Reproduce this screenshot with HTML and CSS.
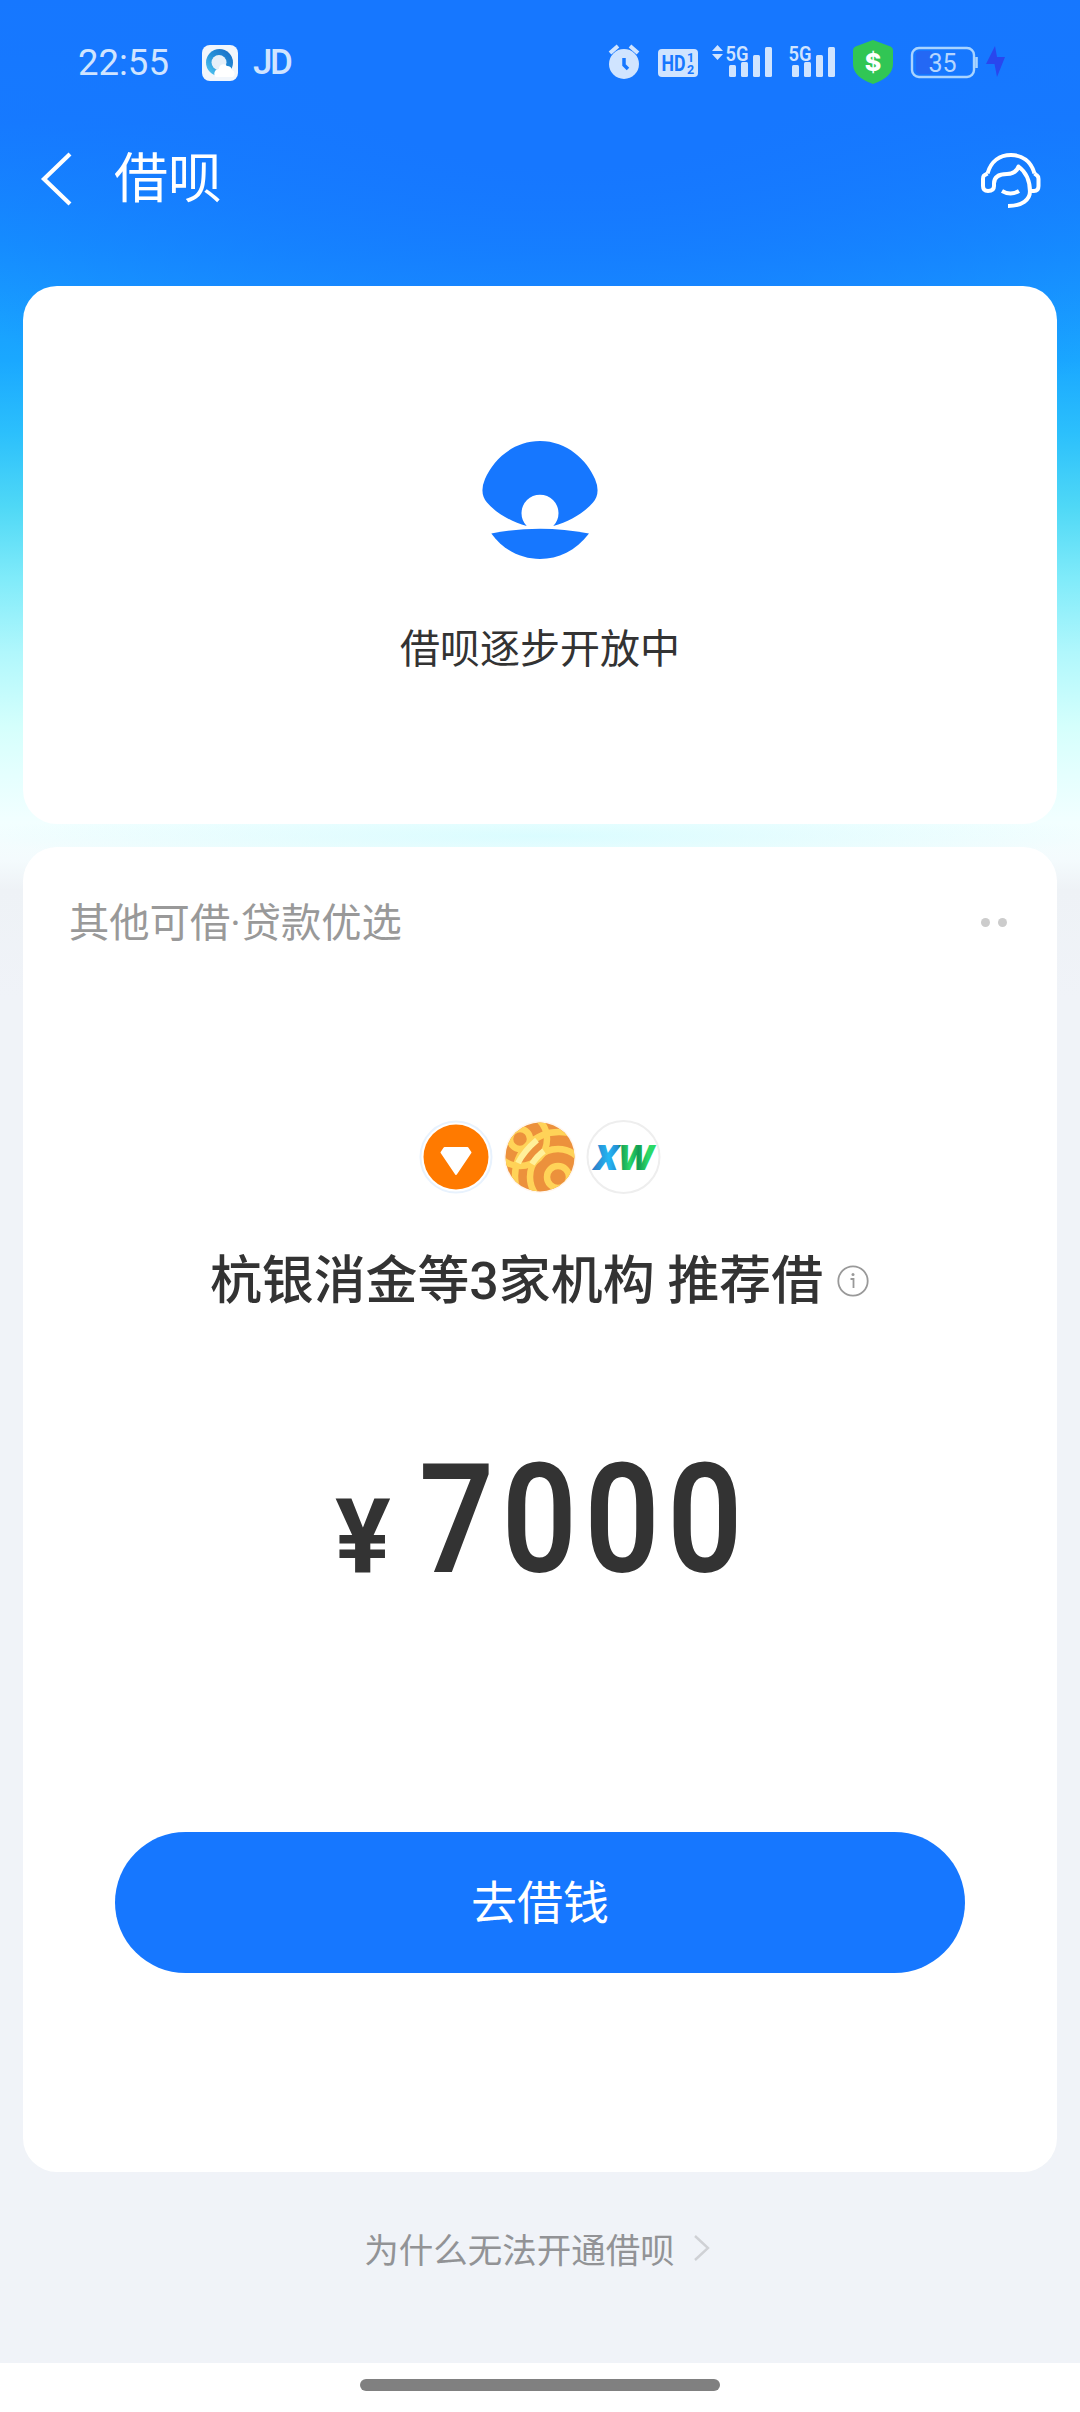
FILE: index.html
```html
<!DOCTYPE html>
<html lang="zh-CN">
<head>
<meta charset="utf-8">
<title>借呗</title>
<link rel="stylesheet" href="styles.css">
</head>
<body>
<div class="page">
  <header class="status">
    <span class="clock">22:55</span>
    <svg class="app" width="36" height="36" viewBox="0 0 36 36">
      <defs><linearGradient id="ring" x1="0" y1="1" x2="1" y2="0"><stop offset="0" stop-color="#58cff5"/><stop offset=".5" stop-color="#2590d8"/><stop offset="1" stop-color="#1769c4"/></linearGradient></defs>
      <rect width="36" height="36" rx="8" fill="#f1f6fc"/>
      <circle cx="17.500" cy="17.500" r="13.500" fill="url(#ring)"/>
      <circle cx="17" cy="17.500" r="7.500" fill="#e6f0f9"/>
      <path d="M14 32a4.500 4.500 0 0 1 3-8a4.500 4.500 0 0 1 8-3a5 5 0 0 1 5 4a4 4 0 0 1 1 7z" fill="#fff"/>
    </svg>
    <span class="jd">JD</span>
    <svg class="tray" width="400" height="50" viewBox="608 38 400 50">
      <g fill="#d0e4ff">
        <circle cx="624" cy="64" r="15"/>
        <path d="M610 53l8-7M638 53l-8-7" stroke="#d0e4ff" stroke-width="4"/>
        <path d="M624 58v7l4 4" fill="none" stroke="#1677ff" stroke-width="3.500"/>
        <rect x="658" y="49" width="40" height="28" rx="4"/>
        <path d="M717.500 45l5.500 6h-11zM717.500 60l5.500-6h-11z"/>
        <rect x="729" y="65" width="7" height="12" rx="1.500"/><rect x="741" y="62" width="7" height="15" rx="1.500"/><rect x="753" y="55" width="7" height="22" rx="1.500"/><rect x="765" y="47" width="7" height="30" rx="1.500"/>
        <rect x="792" y="65" width="7" height="12" rx="1.500"/><rect x="804" y="62" width="7" height="15" rx="1.500"/><rect x="816" y="55" width="7" height="22" rx="1.500"/><rect x="828" y="47" width="7" height="30" rx="1.500"/>
        <text class="net" x="725.500" y="60.500" textLength="23" lengthAdjust="spacingAndGlyphs">5G</text>
        <text class="net" x="788.500" y="60.500" textLength="23" lengthAdjust="spacingAndGlyphs">5G</text>
      </g>
      <g fill="#1677ff">
        <text class="hd" x="661.500" y="71" textLength="24" lengthAdjust="spacingAndGlyphs">HD</text>
        <text class="sub" x="687" y="62">1</text><text class="sub" x="687" y="74">2</text>
      </g>
      <path d="M873 40l17.500 6.500q2.500 1 2.500 3.500v14q0 13-20 20q-20-7-20-20v-14q0-2.500 2.500-3.500z" fill="#31c654"/>
      <text class="dollar" x="873" y="71" text-anchor="middle">$</text>
      <rect x="916" y="51" width="17" height="23" rx="4" fill="#2468f4"/>
      <rect x="912" y="48" width="62" height="29" rx="7" fill="none" stroke="#a9d4ff" stroke-width="2.400"/>
      <path d="M976.500 57v11" stroke="#a9d4ff" stroke-width="2.600"/>
      <text class="level" x="942.500" y="71.500" text-anchor="middle">35</text>
      <path d="M995 46l-9 18h8.500l2.500 13l8-20h-8z" fill="#2947ee"/>
    </svg>
  </header>
  <nav class="nav">
    <svg width="32" height="54" viewBox="0 0 32 54"><path d="M30 2L4 27L30 52" fill="none" stroke="#fff" stroke-width="4.200"/></svg>
    <h1>借呗</h1>
    <svg class="service" width="62" height="58" viewBox="0 0 62 58" fill="none" stroke="#fff" stroke-width="4" stroke-linejoin="round">
      <path d="M7.500 21.500C11 9 20 3 31 3S51 9 54.500 21.500"/>
      <path d="M7.500 21.500L4 23.500Q3 24.500 3 27V34Q3 39 8 39Q14 39 14 34V31.500C14 24 20 22 27 22Q36 22 38.500 14.500C46 20 50 27 50 40"/>
      <path d="M54.500 21.500L57 23.500Q58.500 24.500 58.500 27V34Q58.500 39 54 39H50C50 48 42 54 28 54"/>
      <path d="M22 39Q30.500 44 39 39"/>
    </svg>
  </nav>
  <main>
    <section class="card intro">
      <svg width="116" height="118" viewBox="0 0 116 118" fill="#1677ff">
        <path d="M58 0C85 0 105 19 113 38Q119 52 111 61.500C103 71 88 80.500 71.300 85A18.500 18.500 0 1 0 44.700 85C28 80.500 13 71 5 61.500Q-3 52 3 38C11 19 31 0 58 0Z"/>
        <path d="M9.300 92.500Q58 83 107 92.500C94 110 76 118 58 118S22 110 9.300 92.500Z"/>
      </svg>
      <p>借呗逐步开放中</p>
    </section>
    <section class="card offer">
      <div class="offer-head"><span>其他可借·贷款优选</span><span class="dots"><i></i><i></i></span></div>
      <svg class="lenders" width="242" height="76" viewBox="0 0 242 76">
        <defs>
          <clipPath id="ball"><circle cx="121" cy="38" r="34.500"/></clipPath>
          <linearGradient id="xw" gradientUnits="userSpaceOnUse" x1="175" y1="0" x2="235" y2="0">
            <stop offset="0" stop-color="#2b7fc8"/><stop offset=".25" stop-color="#22b8f4"/><stop offset=".4" stop-color="#2689cf"/>
            <stop offset=".43" stop-color="#149553"/><stop offset=".6" stop-color="#2bd967"/><stop offset=".74" stop-color="#149b53"/><stop offset=".9" stop-color="#2bd967"/>
          </linearGradient>
        </defs>
        <circle cx="37" cy="38" r="35.500" fill="#fff" stroke="#e8f2fd" stroke-width="2"/>
        <circle cx="37" cy="38" r="32.500" fill="#ff7a00"/>
        <path d="M25.500 29h23l3 4.500L37 55L22.500 33.500z" fill="#fff" stroke="#fff" stroke-width="2" stroke-linejoin="round"/>
        <circle cx="121" cy="38" r="36" fill="#fff6ee"/>
        <g clip-path="url(#ball)" fill="none" stroke="#ffd358" stroke-width="6.500">
          <path d="M80 0h80v80H80z" fill="#ec913c" stroke="none"/>
          <circle cx="101" cy="20" r="10"/><circle cx="101" cy="20" r="27"/>
          <circle cx="139" cy="58" r="11"/><circle cx="139" cy="58" r="28"/>
          <circle cx="140" cy="57" r="44"/>
          <path d="M99 44Q105 32 118 21M113 45Q118 37 125 32" stroke="#fff09a" stroke-width="6"/>
        </g>
        <circle cx="204.500" cy="38" r="36" fill="#fff" stroke="#eee" stroke-width="2"/>
        <text class="xw" x="175" y="51" textLength="59" lengthAdjust="spacingAndGlyphs" fill="url(#xw)">XW</text>
      </svg>
      <div class="title">
        <h2>杭银消金等3家机构 推荐借</h2>
        <svg width="32" height="32" viewBox="0 0 32 32"><circle cx="16" cy="16" r="14.700" fill="none" stroke="#999" stroke-width="1.800"/><path d="M13.500 14h3v9" fill="none" stroke="#999" stroke-width="1.800"/><circle cx="16" cy="9.500" r="1.500" fill="#999"/></svg>
      </div>
      <div class="amount"><span class="yen">¥</span><span class="num">7000</span></div>
      <button>去借钱</button>
    </section>
  </main>
  <a class="why">为什么无法开通借呗<svg width="18" height="28" viewBox="0 0 18 28"><path d="M2 2L15 14L2 26" fill="none" stroke="#cfd1d5" stroke-width="2.400"/></svg></a>
  <footer><div class="home"></div></footer>
</div>
</body>
</html>
```
FILE: styles.css
```css
* { box-sizing: border-box; }
body { margin: 0; font-family: Roboto, "Noto Sans CJK SC", sans-serif; color: #333; }
h1, h2, p { margin: 0; }
svg { flex: none; display: block; }
.page {
  width: 1080px;
  height: 2412px;
  display: flex;
  flex-direction: column;
  overflow: hidden;
  background:
    radial-gradient(ellipse 560px 30px at 540px 836px, rgba(210,252,255,.75), rgba(210,252,255,0)) no-repeat,
    radial-gradient(ellipse 800px 480px at 570px 0, #1677ff 35%, rgba(22,119,255,0)) no-repeat,
    linear-gradient(#1677ff 0, #167bff 120px, #1590ff 240px, #1aa8ff 361px, #2cc0fc 434px, #4fd8f6 507px, #80ebfa 579px, #b0f7fc 652px, #d4fffc 725px, #e4fffe 773px, #f2ffff 822px, #f4fbfd 860px, #eef2f6 890px, #f0f3f8 1000px);
}
.status { height: 126px; display: flex; align-items: center; padding-left: 78px; }
.clock, .jd { font-size: 36.500px; line-height: 42px; color: #d0e4ff; }
.clock { width: 124px; }
.jd { margin-left: 15px; width: 45px; font-size: 35px; letter-spacing: -2.500px; font-weight: 500; }
.tray { margin-left: auto; margin-right: 72px; }
.net { font: 600 21px Roboto, sans-serif; }
.hd { font: 700 22px Roboto, sans-serif; }
.sub { font: 700 12.500px Roboto, sans-serif; }
.dollar { font: 800 25px Inter, sans-serif; fill: #fff; }
.level { font: 400 25px Roboto, sans-serif; fill: #b5d5ff; }
.xw { font: italic 800 35px "Open Sans", Roboto, sans-serif; }
.nav { height: 160px; padding: 0 38px 54px 40px; display: flex; align-items: center; }
.nav h1 { margin-left: 42px; padding-top: 2px; font-size: 54px; line-height: 60px; font-weight: 400; color: #fff; }
.service { margin-left: auto; margin-top: 3px; }
main { display: flex; flex-direction: column; gap: 23px; padding: 0 23px; }
.card { background: #fff; border-radius: 34px; display: flex; flex-direction: column; align-items: center; }
.intro { height: 538px; padding-top: 155px; }
.intro p { margin-top: 61px; font-size: 40px; line-height: 60px; }
.offer { height: 1325px; padding: 47px 46px 0; }
.offer-head { align-self: stretch; display: flex; justify-content: space-between; align-items: center; font-size: 40.300px; line-height: 60px; color: #999; }
.dots { display: flex; gap: 8px; padding: 0 4px 4px 0; }
.dots i { width: 9px; height: 9px; border-radius: 50%; background: #ccc; }
.lenders { margin-top: 165px; }
.title { display: flex; align-items: center; gap: 14px; margin-top: 51px; padding-right: 1px; }
.title svg { margin-bottom: 2px; }
.title h2 { font-size: 51.900px; line-height: 72px; font-weight: 500; }
.amount { align-self: stretch; margin-top: 122px; padding-left: 266px; display: flex; align-items: baseline; line-height: 160px; }
.yen { width: 84px; font-size: 104px; font-weight: 700; }
.num { width: 330px; font-size: 153px; font-weight: 600; letter-spacing: 8.800px; transform: scaleX(.86); transform-origin: left; }
button { width: 850px; height: 141px; margin-top: 215px; border: 0; border-radius: 71px; background: #1677ff; color: #fff; font: 400 46px/60px Roboto, "Noto Sans CJK SC", sans-serif; }
.why { height: 191px; padding: 0 5px 40px 0; display: flex; align-items: center; justify-content: center; gap: 18px; font-size: 34.500px; color: #929396; }
footer { flex: 1; background: #fff; padding-top: 16px; }
.home { width: 360px; height: 12px; margin: 0 auto; border-radius: 6px; background: #808080; }
```
